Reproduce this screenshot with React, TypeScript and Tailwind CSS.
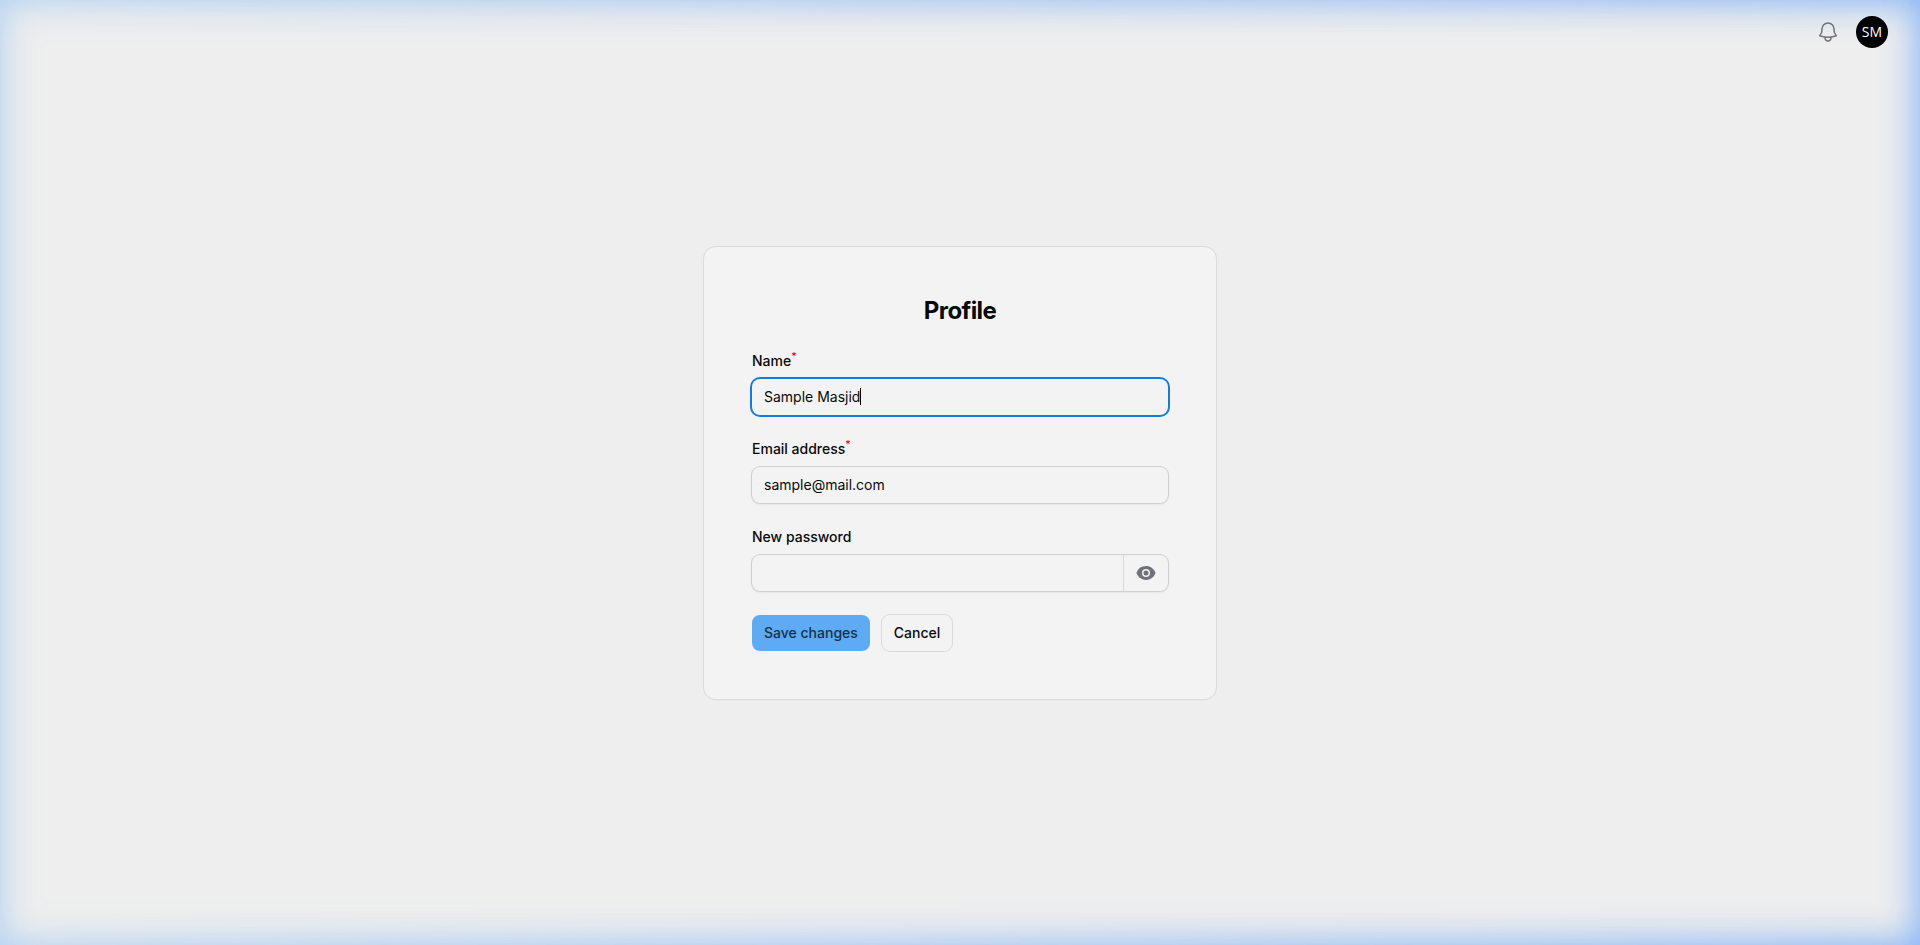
import { useState } from 'react';
import type { ReactNode } from 'react';
import { HiMiniEye, HiOutlineBell } from 'react-icons/hi2';

interface FieldProps {
  id: string;
  label: string;
  required?: boolean;
  children: ReactNode;
}

const wrapperClasses =
  'relative flex rounded-lg bg-[#f3f3f3] ring-1 ring-[#d0d0d0] shadow-sm focus-within:ring-2 focus-within:ring-[#1a7bd7]';
const inputClasses = 'h-9 w-full min-w-0 bg-transparent px-3 text-sm text-zinc-950 outline-none';

const Field = ({ id, label, required = false, children }: FieldProps) => (
  <div className="flex flex-col gap-2">
    <label htmlFor={id} className="text-sm font-medium text-zinc-950">
      {label}
      {required && <sup className="text-red-600">*</sup>}
    </label>
    {children}
  </div>
);

const Topbar = () => (
  <header className="z-10 flex h-16 items-center justify-end gap-4 px-8">
    <button type="button" aria-label="Notifications" className="text-zinc-500">
      <HiOutlineBell className="size-6" />
    </button>
    <button
      type="button"
      aria-label="User menu"
      className="flex size-8 items-center justify-center rounded-full bg-black font-['Open_Sans',sans-serif] text-sm text-white"
    >
      SM
    </button>
  </header>
);

const App = () => {
  const [name, setName] = useState('Sample Masjid');
  const [email, setEmail] = useState('sample@mail.com');
  const [password, setPassword] = useState('');
  const [showPassword, setShowPassword] = useState(false);
  const [showCaret, setShowCaret] = useState(true);

  return (
    <div className="relative grid min-h-screen grid-rows-[64px_1fr_64px] bg-[#eeeeee] font-['Inter',sans-serif] text-zinc-950">
      {/* Blue glow round the window, stronger towards the right */}
      <div className="pointer-events-none absolute inset-0 shadow-[inset_0_0_36px_rgba(120,180,250,0.56)]" />
      <div className="pointer-events-none absolute inset-0 shadow-[inset_0_0_36px_rgba(85,145,250,0.48)] [mask-image:linear-gradient(to_right,transparent,black)]" />

      <Topbar />

      <main className="flex items-center justify-center">
        <section className="flex w-full max-w-lg flex-col gap-6 rounded-xl bg-[#f3f3f3] p-12 shadow-xs ring-1 ring-[#dcdcdc]">
          <h1 className="text-center text-2xl font-bold tracking-tight">Profile</h1>

          <form className="flex flex-col gap-6" onSubmit={(e) => e.preventDefault()}>
            <Field id="name" label="Name" required>
              <div className={wrapperClasses}>
                <input
                  id="name"
                  type="text"
                  required
                  autoFocus
                  value={name}
                  onChange={(e) => {
                    setName(e.target.value);
                    setShowCaret(false);
                  }}
                  onBlur={() => setShowCaret(false)}
                  className={`${inputClasses} ${showCaret ? 'caret-transparent' : ''}`}
                />
                {showCaret && (
                  <span className="pointer-events-none absolute top-[9px] left-[108px] h-[17px] w-px bg-black" />
                )}
              </div>
            </Field>

            <Field id="email" label="Email address" required>
              <div className={wrapperClasses}>
                <input
                  id="email"
                  type="email"
                  required
                  value={email}
                  onChange={(e) => setEmail(e.target.value)}
                  className={inputClasses}
                />
              </div>
            </Field>

            <Field id="password" label="New password">
              <div className={wrapperClasses}>
                <input
                  id="password"
                  type={showPassword ? 'text' : 'password'}
                  value={password}
                  onChange={(e) => setPassword(e.target.value)}
                  className={inputClasses}
                />
                <button
                  type="button"
                  aria-label="Show password"
                  onClick={() => setShowPassword(!showPassword)}
                  className="flex items-center border-l border-[#d8d8d8] px-3 text-zinc-500"
                >
                  <HiMiniEye className="size-5" />
                </button>
              </div>
            </Field>

            <div className="flex gap-3">
              <button
                type="submit"
                className="h-9 rounded-lg bg-[#5eabf4] px-3 text-sm font-medium text-[#14304f]"
              >
                Save changes
              </button>
              <button
                type="button"
                className="h-9 rounded-lg bg-[#f3f3f3] px-3 text-sm font-medium ring-1 ring-[#dadada]"
              >
                Cancel
              </button>
            </div>
          </form>
        </section>
      </main>
    </div>
  );
};

export default App;
